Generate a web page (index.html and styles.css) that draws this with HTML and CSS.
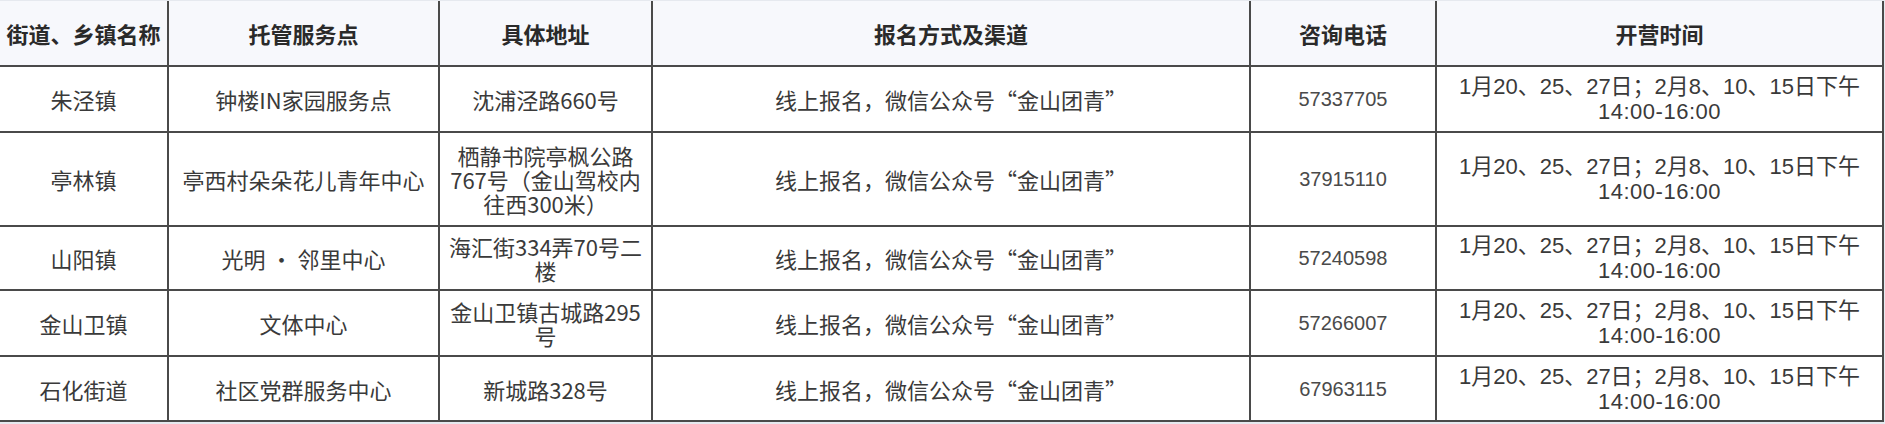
FILE: index.html
```html
<!DOCTYPE html>
<html lang="zh-CN">
<head>
<meta charset="utf-8">
<title>托管服务点</title>
<link rel="stylesheet" href="styles.css">
</head>
<body>
<table class="grid">
  <colgroup>
    <col class="c1"><col class="c2"><col class="c3"><col class="c4"><col class="c5"><col class="c6">
  </colgroup>
  <thead>
    <tr class="rh">
      <th>街道、乡镇名称</th>
      <th>托管服务点</th>
      <th>具体地址</th>
      <th>报名方式及渠道</th>
      <th>咨询电话</th>
      <th>开营时间</th>
    </tr>
  </thead>
  <tbody>
    <tr class="r1">
      <td>朱泾镇</td>
      <td>钟楼IN家园服务点</td>
      <td>沈浦泾路660号</td>
      <td>线上报名，微信公众号“金山团青”</td>
      <td class="tel">57337705</td>
      <td class="time"><span class="ln">1月20、25、27日；2月8、10、15日下午</span><span class="ln">14:00-16:00</span></td>
    </tr>
    <tr class="r2">
      <td>亭林镇</td>
      <td>亭西村朵朵花儿青年中心</td>
      <td class="addr">栖静书院亭枫公路767号（金山驾校内往西300米）</td>
      <td>线上报名，微信公众号“金山团青”</td>
      <td class="tel">37915110</td>
      <td class="time"><span class="ln">1月20、25、27日；2月8、10、15日下午</span><span class="ln">14:00-16:00</span></td>
    </tr>
    <tr class="r3">
      <td>山阳镇</td>
      <td>光明 · 邻里中心</td>
      <td class="addr">海汇街334弄70号二楼</td>
      <td>线上报名，微信公众号“金山团青”</td>
      <td class="tel">57240598</td>
      <td class="time"><span class="ln">1月20、25、27日；2月8、10、15日下午</span><span class="ln">14:00-16:00</span></td>
    </tr>
    <tr class="r4">
      <td>金山卫镇</td>
      <td>文体中心</td>
      <td class="addr">金山卫镇古城路295号</td>
      <td>线上报名，微信公众号“金山团青”</td>
      <td class="tel">57266007</td>
      <td class="time"><span class="ln">1月20、25、27日；2月8、10、15日下午</span><span class="ln">14:00-16:00</span></td>
    </tr>
    <tr class="r5">
      <td>石化街道</td>
      <td>社区党群服务中心</td>
      <td class="addr">新城路328号</td>
      <td>线上报名，微信公众号“金山团青”</td>
      <td class="tel">67963115</td>
      <td class="time"><span class="ln">1月20、25、27日；2月8、10、15日下午</span><span class="ln">14:00-16:00</span></td>
    </tr>
  </tbody>
</table>
</body>
</html>
```

FILE: styles.css
```css
html, body {
  margin: 0;
  padding: 0;
  background: #e6e9ef;
}

body {
  padding-top: 1px;
  font-family: "Noto Sans CJK SC", "Noto Sans", sans-serif;
}

.grid {
  table-layout: fixed;
  width: 1884px;
  border-collapse: separate;
  border-spacing: 0;
  background: #ffffff;
}

.c1 { width: 169px; }
.c2 { width: 271px; }
.c3 { width: 213px; }
.c4 { width: 598px; }
.c5 { width: 186px; }
.c6 { width: 447px; }

.grid th,
.grid td {
  box-sizing: border-box;
  border-right: 2px solid #4a4a4a;
  border-bottom: 2px solid #4a4a4a;
  padding: 0 4px;
  text-align: center;
  vertical-align: middle;
  font-size: 22px;
  line-height: 24px;
  color: #3a3a3a;
  font-weight: 400;
}

.grid th {
  background: #f7f8fc;
  color: #2a2a2a;
  font-weight: 700;
}

.grid .tel {
  font-family: "Liberation Sans", "Noto Sans CJK SC", sans-serif;
  font-size: 20px;
  color: #4a4a4a;
}

.grid .addr {
  padding: 0 5px;
}

.grid .time {
  font-family: "Liberation Sans", "Noto Sans CJK SC", sans-serif;
}

.time .ln {
  display: block;
  line-height: 25px;
}

.time .ln + .ln {
  letter-spacing: 0.5px;
}

.rh { height: 66px; }
.r1 { height: 66px; }
.r2 { height: 94px; }
.r3 { height: 64px; }
.r4 { height: 66px; }
.r5 { height: 65px; }
```
